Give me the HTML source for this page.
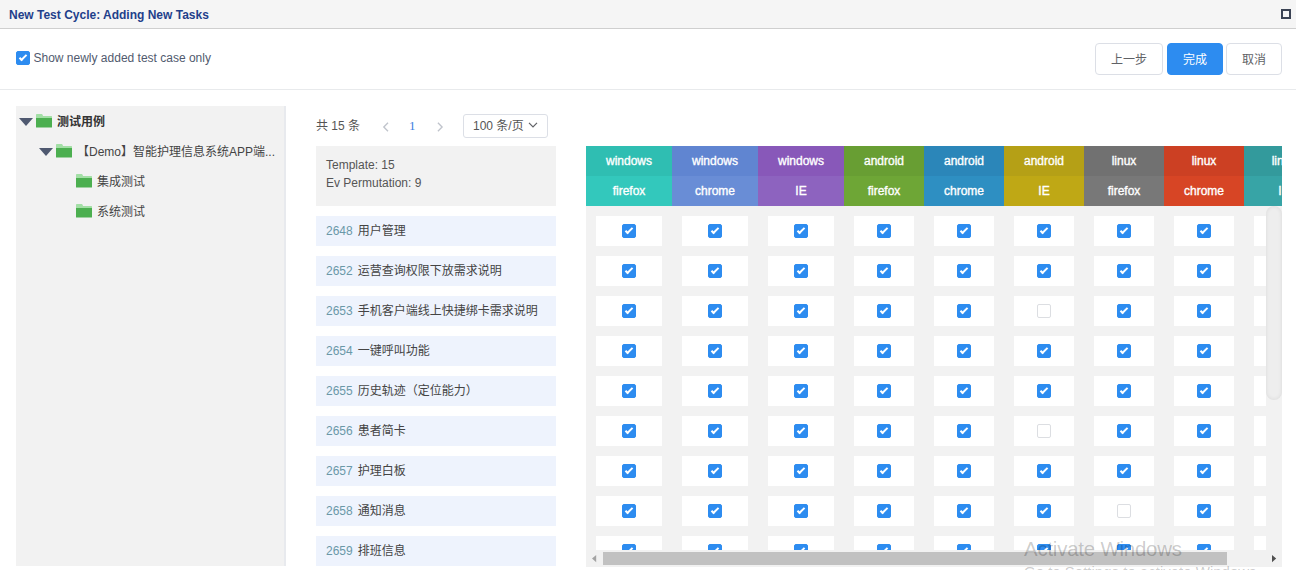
<!DOCTYPE html>
<html lang="zh-CN">
<head>
<meta charset="utf-8">
<title>New Test Cycle: Adding New Tasks</title>
<style>
*{box-sizing:border-box;margin:0;padding:0}
html,body{width:1296px;height:570px;overflow:hidden;background:#fff}
body{position:relative;font-family:"Liberation Sans","Noto Sans CJK SC",sans-serif;font-size:12px;color:#555}
.titlebar{position:absolute;left:0;top:0;width:1296px;height:29px;background:#f5f5f5;border-bottom:1px solid #cfcfcf}
.title{position:absolute;left:9px;top:8px;line-height:15px;font-weight:bold;color:#1f3f8b;font-size:12px;white-space:nowrap}
.maxi{position:absolute;left:1281px;top:9px;width:10px;height:10px;border:2px solid #3b4354}
.toolbar{position:absolute;left:0;top:29px;width:1296px;height:60px}
.showonly{position:absolute;left:16px;top:22px;height:14px;white-space:nowrap}
.showonly .cb{position:absolute;left:0;top:0}
.lbl{position:absolute;left:17.5px;top:0;line-height:14px;color:#515a6e}
.cb{display:block;width:14px;height:14px;border:1px solid #dcdee2;border-radius:2px;background:#fff;position:relative}
.cb.on{background:#2d8cf0;border-color:#2d8cf0}
.cb i{display:none}
.cb.on i{display:block;position:absolute;left:4px;top:1px;width:4px;height:8px;border:2px solid #fff;border-top:0;border-left:0;transform:rotate(45deg)}
.btn{position:absolute;top:14px;height:32px;border:1px solid #dcdfe6;border-radius:4px;background:#fff;color:#606266;font-family:inherit;font-size:12px;line-height:30px;padding-top:1px !important;text-align:center;padding:0}
.btn.primary{background:#2d8cf0;border-color:#2d8cf0;color:#fff}
.divider{position:absolute;left:0;top:89px;width:1296px;height:1px;background:#e8eaec}
.tree{position:absolute;left:16px;top:106px;width:270px;height:460px;background:#f2f2f2;border-right:2px solid #e8eaee}
.node{position:absolute;left:0;width:270px;height:30px}
.arrow{position:absolute;top:12px;width:0;height:0;border-left:7px solid transparent;border-right:7px solid transparent;border-top:8px solid #4f5970}
.folder{position:absolute;top:8px;width:16px;height:14px}
.folder svg{display:block}
.nt{position:absolute;top:8px;line-height:16px;color:#444;white-space:nowrap}
.nt.bold{font-weight:bold;color:#333}
.nt.ell{overflow:hidden;text-overflow:ellipsis}
.pager{position:absolute;left:316px;top:114px;height:24px;width:260px;color:#606266}
.pager .total{position:absolute;left:0;top:0;line-height:24px;color:#555}
.pg{position:absolute;top:0;height:24px;line-height:24px}
.pg svg{position:absolute;top:6.5px;left:0}
.pg.prev{left:66px}
.pg.next{left:120px}
.pg.num{left:93px;font-family:"Liberation Serif",serif;font-size:13px;color:#3d7fdf}
.sizer{position:absolute;left:147px;top:0;width:85px;height:24px;border:1px solid #dcdfe6;border-radius:3px;background:#fff}
.sizer .sz{position:absolute;left:9px;top:0;line-height:22px;color:#555}
.sizer .chev{position:absolute;left:63.5px;top:7.2px}
.info{position:absolute;left:316px;top:146px;width:240px;height:60px;background:#f2f2f2;padding:10px 10px;line-height:18px;color:#555}
.cases{position:absolute;left:316px;top:216px;width:240px;height:350px;overflow:hidden}
.case{position:absolute;left:0;width:240px;height:30px;background:#eef3fd;line-height:30px;white-space:nowrap;padding-left:10px}
.cid{color:#6a98a8;margin-right:5px}
.cname{color:#444}
.grid{position:absolute;left:586px;top:146px;width:696px;height:421px;overflow:hidden;background:#f2f2f2}
.ghead{position:absolute;left:0;top:0;width:744px;height:60px}
.gh{position:absolute;top:0;height:60px;color:#fff;text-align:center;-webkit-text-stroke:.35px #fff}
.gh div{height:30px;line-height:30px}
.gbody{position:absolute;left:0;top:60px;width:696px;height:344px;overflow:hidden}
.grow{position:absolute;left:0;height:30px;width:744px}
.cell{position:absolute;top:0;height:30px;background:#fff}
.cell .cb{position:absolute;left:50%;top:8px;margin-left:-7px}
.vtrack{position:absolute;left:680px;top:0;width:16px;height:344px;background:#f2f2f2}
.vthumb{position:absolute;left:680px;top:0;width:16px;height:194px;background:#eee;border-radius:8px;box-shadow:inset 0 0 4px rgba(0,0,0,.09)}
.hscroll{position:absolute;left:0;top:404px;width:696px;height:17px;background:#f1f1f1}
.hthumb{position:absolute;left:17px;top:2px;width:624px;height:13px;background:#c1c1c1}
.la{position:absolute;left:5.8px;top:4.8px;width:5px;height:8px}
.ra{position:absolute;left:686px;top:4.8px;width:5px;height:8px}
.la svg,.ra svg{display:block}
.wm{position:absolute;left:1024px;top:536px;white-space:nowrap;color:rgba(0,0,0,.21);font-family:"Liberation Sans",sans-serif;pointer-events:none}
.wm1{font-size:20.4px;line-height:26px;letter-spacing:-.2px}
.wm2{font-size:15px;line-height:20px;margin-top:0}
</style>
</head>
<body>
<div class="titlebar"><span class="title">New Test Cycle: Adding New Tasks</span><span class="maxi"></span></div>
<div class="toolbar">
  <label class="showonly"><span class="cb on"><i></i></span><span class="lbl">Show newly added test case only</span></label>
  <div class="btns"><button class="btn" style="left:1095px;width:68px">上一步</button><button class="btn primary" style="left:1167px;width:56px">完成</button><button class="btn" style="left:1226px;width:56px">取消</button></div>
</div>
<div class="divider"></div>
<div class="tree">
  <div class="node" style="top:0"><span class="arrow" style="left:3px"></span><span class="folder" style="left:20px"><svg width="16" height="14" viewBox="0 0 16 14"><path d="M0 .8Q0 0 .8 0H5.6Q6.2 0 6.5 .6L7 2H15.4Q16 2 16 2.6V4H0Z" fill="#a3dfa6"/><path d="M0 4H16V13Q16 13.6 15.4 13.6H.6Q0 13.6 0 13Z" fill="#4caf50"/></svg></span><span class="nt bold" style="left:41px">测试用例</span></div>
  <div class="node" style="top:30px"><span class="arrow" style="left:23px"></span><span class="folder" style="left:40px"><svg width="16" height="14" viewBox="0 0 16 14"><path d="M0 .8Q0 0 .8 0H5.6Q6.2 0 6.5 .6L7 2H15.4Q16 2 16 2.6V4H0Z" fill="#a3dfa6"/><path d="M0 4H16V13Q16 13.6 15.4 13.6H.6Q0 13.6 0 13Z" fill="#4caf50"/></svg></span><span class="nt" style="left:61px">【Demo】智能护理信息系统APP端...</span></div>
  <div class="node" style="top:60px"><span class="folder" style="left:60px"><svg width="16" height="14" viewBox="0 0 16 14"><path d="M0 .8Q0 0 .8 0H5.6Q6.2 0 6.5 .6L7 2H15.4Q16 2 16 2.6V4H0Z" fill="#a3dfa6"/><path d="M0 4H16V13Q16 13.6 15.4 13.6H.6Q0 13.6 0 13Z" fill="#4caf50"/></svg></span><span class="nt" style="left:81px">集成测试</span></div>
  <div class="node" style="top:90px"><span class="folder" style="left:60px"><svg width="16" height="14" viewBox="0 0 16 14"><path d="M0 .8Q0 0 .8 0H5.6Q6.2 0 6.5 .6L7 2H15.4Q16 2 16 2.6V4H0Z" fill="#a3dfa6"/><path d="M0 4H16V13Q16 13.6 15.4 13.6H.6Q0 13.6 0 13Z" fill="#4caf50"/></svg></span><span class="nt" style="left:81px">系统测试</span></div>
</div>
<div class="pager">
  <span class="total">共 15 条</span>
  <span class="pg prev"><svg width="8" height="12" viewBox="0 0 8 12"><path d="M6 1.8 L1.8 6 L6 10.2" fill="none" stroke="#c0c4cc" stroke-width="1.35"/></svg></span>
  <span class="pg num">1</span>
  <span class="pg next"><svg width="8" height="12" viewBox="0 0 8 12"><path d="M1.9 1.8 L6.1 6 L1.9 10.2" fill="none" stroke="#c0c4cc" stroke-width="1.35"/></svg></span>
  <span class="sizer"><span class="sz">100 条/页</span><svg class="chev" width="10" height="6" viewBox="0 0 10 6"><path d="M1 0.8 L5 4.8 L9 0.8" fill="none" stroke="#606266" stroke-width="1.2"/></svg></span>
</div>
<div class="info"><div>Template: 15</div><div>Ev Permutation: 9</div></div>
<div class="cases">
  <div class="case" style="top:0px"><span class="cid">2648</span><span class="cname">用户管理</span></div>
  <div class="case" style="top:40px"><span class="cid">2652</span><span class="cname">运营查询权限下放需求说明</span></div>
  <div class="case" style="top:80px"><span class="cid">2653</span><span class="cname">手机客户端线上快捷绑卡需求说明</span></div>
  <div class="case" style="top:120px"><span class="cid">2654</span><span class="cname">一键呼叫功能</span></div>
  <div class="case" style="top:160px"><span class="cid">2655</span><span class="cname">历史轨迹（定位能力）</span></div>
  <div class="case" style="top:200px"><span class="cid">2656</span><span class="cname">患者简卡</span></div>
  <div class="case" style="top:240px"><span class="cid">2657</span><span class="cname">护理白板</span></div>
  <div class="case" style="top:280px"><span class="cid">2658</span><span class="cname">通知消息</span></div>
  <div class="case" style="top:320px"><span class="cid">2659</span><span class="cname">排班信息</span></div>
</div>
<div class="grid">
  <div class="ghead">
    <div class="gh" style="left:0px;width:86px"><div class="h1" style="background:#2fbeb2">windows</div><div class="h2" style="background:#33c8bc">firefox</div></div>
    <div class="gh" style="left:86px;width:86px"><div class="h1" style="background:#6085d1">windows</div><div class="h2" style="background:#698dd6">chrome</div></div>
    <div class="gh" style="left:172px;width:86px"><div class="h1" style="background:#8858b9">windows</div><div class="h2" style="background:#8d63bf">IE</div></div>
    <div class="gh" style="left:258px;width:80px"><div class="h1" style="background:#689e33">android</div><div class="h2" style="background:#6ea636">firefox</div></div>
    <div class="gh" style="left:338px;width:80px"><div class="h1" style="background:#2b86b9">android</div><div class="h2" style="background:#2e8fc2">chrome</div></div>
    <div class="gh" style="left:418px;width:80px"><div class="h1" style="background:#b5a016">android</div><div class="h2" style="background:#bfa815">IE</div></div>
    <div class="gh" style="left:498px;width:80px"><div class="h1" style="background:#717171">linux</div><div class="h2" style="background:#787878">firefox</div></div>
    <div class="gh" style="left:578px;width:80px"><div class="h1" style="background:#cc4023">linux</div><div class="h2" style="background:#d74525">chrome</div></div>
    <div class="gh" style="left:658px;width:80px"><div class="h1" style="background:#339a9c">linux</div><div class="h2" style="background:#37a4a6">IE</div></div>
  </div>
  <div class="gbody">
    <div class="grow" style="top:10px"><div class="cell" style="left:10px;width:66px"><span class="cb on"><i></i></span></div><div class="cell" style="left:96px;width:66px"><span class="cb on"><i></i></span></div><div class="cell" style="left:182px;width:66px"><span class="cb on"><i></i></span></div><div class="cell" style="left:268px;width:60px"><span class="cb on"><i></i></span></div><div class="cell" style="left:348px;width:60px"><span class="cb on"><i></i></span></div><div class="cell" style="left:428px;width:60px"><span class="cb on"><i></i></span></div><div class="cell" style="left:508px;width:60px"><span class="cb on"><i></i></span></div><div class="cell" style="left:588px;width:60px"><span class="cb on"><i></i></span></div><div class="cell" style="left:668px;width:60px"><span class="cb on"><i></i></span></div></div>
    <div class="grow" style="top:50px"><div class="cell" style="left:10px;width:66px"><span class="cb on"><i></i></span></div><div class="cell" style="left:96px;width:66px"><span class="cb on"><i></i></span></div><div class="cell" style="left:182px;width:66px"><span class="cb on"><i></i></span></div><div class="cell" style="left:268px;width:60px"><span class="cb on"><i></i></span></div><div class="cell" style="left:348px;width:60px"><span class="cb on"><i></i></span></div><div class="cell" style="left:428px;width:60px"><span class="cb on"><i></i></span></div><div class="cell" style="left:508px;width:60px"><span class="cb on"><i></i></span></div><div class="cell" style="left:588px;width:60px"><span class="cb on"><i></i></span></div><div class="cell" style="left:668px;width:60px"><span class="cb on"><i></i></span></div></div>
    <div class="grow" style="top:90px"><div class="cell" style="left:10px;width:66px"><span class="cb on"><i></i></span></div><div class="cell" style="left:96px;width:66px"><span class="cb on"><i></i></span></div><div class="cell" style="left:182px;width:66px"><span class="cb on"><i></i></span></div><div class="cell" style="left:268px;width:60px"><span class="cb on"><i></i></span></div><div class="cell" style="left:348px;width:60px"><span class="cb on"><i></i></span></div><div class="cell" style="left:428px;width:60px"><span class="cb"><i></i></span></div><div class="cell" style="left:508px;width:60px"><span class="cb on"><i></i></span></div><div class="cell" style="left:588px;width:60px"><span class="cb on"><i></i></span></div><div class="cell" style="left:668px;width:60px"><span class="cb on"><i></i></span></div></div>
    <div class="grow" style="top:130px"><div class="cell" style="left:10px;width:66px"><span class="cb on"><i></i></span></div><div class="cell" style="left:96px;width:66px"><span class="cb on"><i></i></span></div><div class="cell" style="left:182px;width:66px"><span class="cb on"><i></i></span></div><div class="cell" style="left:268px;width:60px"><span class="cb on"><i></i></span></div><div class="cell" style="left:348px;width:60px"><span class="cb on"><i></i></span></div><div class="cell" style="left:428px;width:60px"><span class="cb on"><i></i></span></div><div class="cell" style="left:508px;width:60px"><span class="cb on"><i></i></span></div><div class="cell" style="left:588px;width:60px"><span class="cb on"><i></i></span></div><div class="cell" style="left:668px;width:60px"><span class="cb on"><i></i></span></div></div>
    <div class="grow" style="top:170px"><div class="cell" style="left:10px;width:66px"><span class="cb on"><i></i></span></div><div class="cell" style="left:96px;width:66px"><span class="cb on"><i></i></span></div><div class="cell" style="left:182px;width:66px"><span class="cb on"><i></i></span></div><div class="cell" style="left:268px;width:60px"><span class="cb on"><i></i></span></div><div class="cell" style="left:348px;width:60px"><span class="cb on"><i></i></span></div><div class="cell" style="left:428px;width:60px"><span class="cb on"><i></i></span></div><div class="cell" style="left:508px;width:60px"><span class="cb on"><i></i></span></div><div class="cell" style="left:588px;width:60px"><span class="cb on"><i></i></span></div><div class="cell" style="left:668px;width:60px"><span class="cb on"><i></i></span></div></div>
    <div class="grow" style="top:210px"><div class="cell" style="left:10px;width:66px"><span class="cb on"><i></i></span></div><div class="cell" style="left:96px;width:66px"><span class="cb on"><i></i></span></div><div class="cell" style="left:182px;width:66px"><span class="cb on"><i></i></span></div><div class="cell" style="left:268px;width:60px"><span class="cb on"><i></i></span></div><div class="cell" style="left:348px;width:60px"><span class="cb on"><i></i></span></div><div class="cell" style="left:428px;width:60px"><span class="cb"><i></i></span></div><div class="cell" style="left:508px;width:60px"><span class="cb on"><i></i></span></div><div class="cell" style="left:588px;width:60px"><span class="cb on"><i></i></span></div><div class="cell" style="left:668px;width:60px"><span class="cb on"><i></i></span></div></div>
    <div class="grow" style="top:250px"><div class="cell" style="left:10px;width:66px"><span class="cb on"><i></i></span></div><div class="cell" style="left:96px;width:66px"><span class="cb on"><i></i></span></div><div class="cell" style="left:182px;width:66px"><span class="cb on"><i></i></span></div><div class="cell" style="left:268px;width:60px"><span class="cb on"><i></i></span></div><div class="cell" style="left:348px;width:60px"><span class="cb on"><i></i></span></div><div class="cell" style="left:428px;width:60px"><span class="cb on"><i></i></span></div><div class="cell" style="left:508px;width:60px"><span class="cb on"><i></i></span></div><div class="cell" style="left:588px;width:60px"><span class="cb on"><i></i></span></div><div class="cell" style="left:668px;width:60px"><span class="cb on"><i></i></span></div></div>
    <div class="grow" style="top:290px"><div class="cell" style="left:10px;width:66px"><span class="cb on"><i></i></span></div><div class="cell" style="left:96px;width:66px"><span class="cb on"><i></i></span></div><div class="cell" style="left:182px;width:66px"><span class="cb on"><i></i></span></div><div class="cell" style="left:268px;width:60px"><span class="cb on"><i></i></span></div><div class="cell" style="left:348px;width:60px"><span class="cb on"><i></i></span></div><div class="cell" style="left:428px;width:60px"><span class="cb on"><i></i></span></div><div class="cell" style="left:508px;width:60px"><span class="cb"><i></i></span></div><div class="cell" style="left:588px;width:60px"><span class="cb on"><i></i></span></div><div class="cell" style="left:668px;width:60px"><span class="cb on"><i></i></span></div></div>
    <div class="grow" style="top:330px"><div class="cell" style="left:10px;width:66px"><span class="cb on"><i></i></span></div><div class="cell" style="left:96px;width:66px"><span class="cb on"><i></i></span></div><div class="cell" style="left:182px;width:66px"><span class="cb on"><i></i></span></div><div class="cell" style="left:268px;width:60px"><span class="cb on"><i></i></span></div><div class="cell" style="left:348px;width:60px"><span class="cb on"><i></i></span></div><div class="cell" style="left:428px;width:60px"><span class="cb on"><i></i></span></div><div class="cell" style="left:508px;width:60px"><span class="cb on"><i></i></span></div><div class="cell" style="left:588px;width:60px"><span class="cb on"><i></i></span></div><div class="cell" style="left:668px;width:60px"><span class="cb on"><i></i></span></div></div>
    <div class="vtrack"></div>
    <div class="vthumb"></div>
  </div>
  <div class="hscroll"><span class="la"><svg width="5" height="8" viewBox="0 0 5 8"><path d="M4.2 0 L0 3.6 L4.2 7.2 Z" fill="#a3a3a3"/></svg></span><span class="hthumb"></span><span class="ra"><svg width="5" height="8" viewBox="0 0 5 8"><path d="M0 0 L4.2 3.6 L0 7.2 Z" fill="#505050"/></svg></span></div>
</div>
<div class="wm"><div class="wm1">Activate Windows</div><div class="wm2">Go to Settings to activate Windows.</div></div>
</body>
</html>
